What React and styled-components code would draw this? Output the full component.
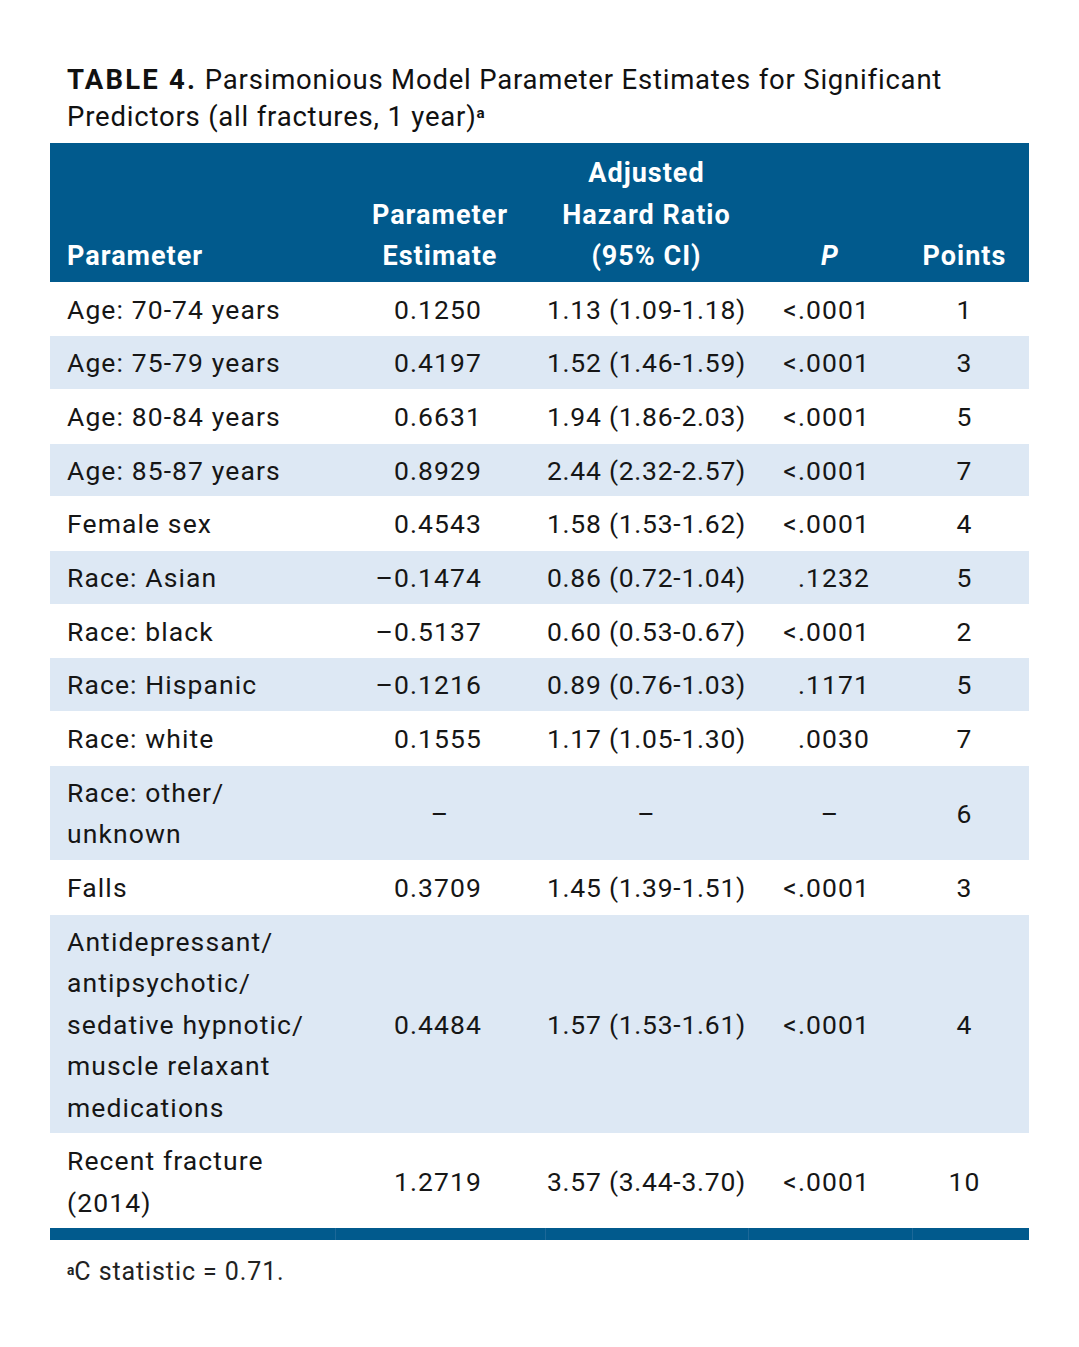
import React from 'react';
import styled, { createGlobalStyle } from 'styled-components';

const GlobalStyle = createGlobalStyle`
  body {
    margin: 0;
    background: #fff;
    font-family: Roboto, "Liberation Sans", sans-serif;
    color: #1a1a1a;
  }
`;

const ROWS = [
  { label: ['Age: 70-74 years'], est: '0.1250', hr: '1.13 (1.09-1.18)', p: '<.0001', pts: '1' },
  { label: ['Age: 75-79 years'], est: '0.4197', hr: '1.52 (1.46-1.59)', p: '<.0001', pts: '3' },
  { label: ['Age: 80-84 years'], est: '0.6631', hr: '1.94 (1.86-2.03)', p: '<.0001', pts: '5' },
  { label: ['Age: 85-87 years'], est: '0.8929', hr: '2.44 (2.32-2.57)', p: '<.0001', pts: '7' },
  { label: ['Female sex'], est: '0.4543', hr: '1.58 (1.53-1.62)', p: '<.0001', pts: '4' },
  { label: ['Race: Asian'], est: '\u20130.1474', hr: '0.86 (0.72-1.04)', p: '.1232', pts: '5' },
  { label: ['Race: black'], est: '\u20130.5137', hr: '0.60 (0.53-0.67)', p: '<.0001', pts: '2' },
  { label: ['Race: Hispanic'], est: '\u20130.1216', hr: '0.89 (0.76-1.03)', p: '.1171', pts: '5' },
  { label: ['Race: white'], est: '0.1555', hr: '1.17 (1.05-1.30)', p: '.0030', pts: '7' },
  { label: ['Race: other/', 'unknown'], est: null, hr: null, p: null, pts: '6' },
  { label: ['Falls'], est: '0.3709', hr: '1.45 (1.39-1.51)', p: '<.0001', pts: '3' },
  {
    label: ['Antidepressant/', 'antipsychotic/', 'sedative hypnotic/', 'muscle relaxant', 'medications'],
    est: '0.4484',
    hr: '1.57 (1.53-1.61)',
    p: '<.0001',
    pts: '4',
  },
  { label: ['Recent fracture', '(2014)'], est: '1.2719', hr: '3.57 (3.44-3.70)', p: '<.0001', pts: '10' },
];

function Lines({ lines }) {
  return lines.map((line, i) => (
    <React.Fragment key={i}>
      {i > 0 && <br />}
      {line}
    </React.Fragment>
  ));
}

function App() {
  return (
    <Page>
      <GlobalStyle />
      <Caption>
        <CaptionLabel>TABLE 4.</CaptionLabel> Parsimonious Model Parameter Estimates for Significant
        Predictors (all fractures, 1 year)<Sup>a</Sup>
      </Caption>
      <Table>
        <colgroup>
          <col style={{ width: 285 }} />
          <col style={{ width: 210 }} />
          <col style={{ width: 203 }} />
          <col style={{ width: 164 }} />
          <col style={{ width: 117 }} />
        </colgroup>
        <thead>
          <tr>
            <Th $align="left">Parameter</Th>
            <Th>
              Parameter
              <br />
              Estimate
            </Th>
            <Th>
              Adjusted
              <br />
              Hazard Ratio
              <br />
              (95% CI)
            </Th>
            <Th>
              <i>P</i>
            </Th>
            <Th $padRight={12}>Points</Th>
          </tr>
        </thead>
        <tbody>
          {ROWS.map((row, i) => (
            <Row key={i} $shaded={i % 2 === 1}>
              <Td $align="left">
                <Lines lines={row.label} />
              </Td>
              {row.est ? <Td $align="right" $padRight={63}>{row.est}</Td> : <Td>–</Td>}
              {row.hr ? <Td $numeric $padRight={0}>{row.hr}</Td> : <Td>–</Td>}
              {row.p ? <Td $align="right" $padRight={42}>{row.p}</Td> : <Td $padRight={0}>–</Td>}
              <Td $padRight={12}>{row.pts}</Td>
            </Row>
          ))}
        </tbody>
        <tfoot>
          <tr>
            <FootBar />
            <FootBar />
            <FootBar />
            <FootBar />
            <FootBar />
          </tr>
        </tfoot>
      </Table>
      <Footnote>
        <Sup>a</Sup>C statistic = 0.71.
      </Footnote>
    </Page>
  );
}

const Page = styled.div`
  padding: 61px 50px 60px 50px;
  width: 979px;
`;

const Caption = styled.div`
  padding: 0 17px;
  font-size: 27.5px;
  line-height: 37px;
  color: #111;
  margin-bottom: 8px;
  letter-spacing: 0.8px;
`;

const CaptionLabel = styled.span`
  font-weight: 700;
  letter-spacing: 2.2px;
`;

const Sup = styled.span`
  display: inline-block;
  font-size: 0.55em;
  font-weight: 700;
  line-height: 1;
  vertical-align: top;
  margin-top: 0.5em;
  letter-spacing: 0;
`;

const Table = styled.table`
  width: 979px;
  border-collapse: collapse;
  table-layout: fixed;
`;

const Th = styled.th`
  background: #015a8d;
  color: #fff;
  font-weight: 700;
  font-size: 27px;
  line-height: 41.5px;
  letter-spacing: 1px;
  white-space: nowrap;
  vertical-align: bottom;
  text-align: ${(p) => p.$align || 'center'};
  padding: 10px ${(p) => (p.$padRight != null ? p.$padRight : 0)}px 4px
    ${(p) => (p.$align === 'left' ? 17 : 0)}px;
`;

const Row = styled.tr`
  background: ${(p) => (p.$shaded ? '#dde8f4' : '#ffffff')};
  border-top: 1px solid #ffffff;
`;

const Td = styled.td`
  font-size: 26.5px;
  line-height: 41.5px;
  letter-spacing: ${(p) => (p.$numeric ? '0.75px' : '1.1px')};
  white-space: nowrap;
  color: #161616;
  vertical-align: middle;
  text-align: ${(p) => p.$align || 'center'};
  padding: 6.1px ${(p) => (p.$padRight != null ? p.$padRight : 0)}px 5.1px
    ${(p) => (p.$align === 'left' ? 17 : 0)}px;
`;

const FootBar = styled.td`
  background: #015a8d;
  height: 12px;
  padding: 0;
  border-left: 1px solid #1c6898;
  &:first-child {
    border-left: none;
  }
`;

const Footnote = styled.div`
  padding: 17px 17px 0;
  font-size: 25px;
  line-height: 30px;
  color: #222;
  letter-spacing: 0.9px;
`;

export default App;
